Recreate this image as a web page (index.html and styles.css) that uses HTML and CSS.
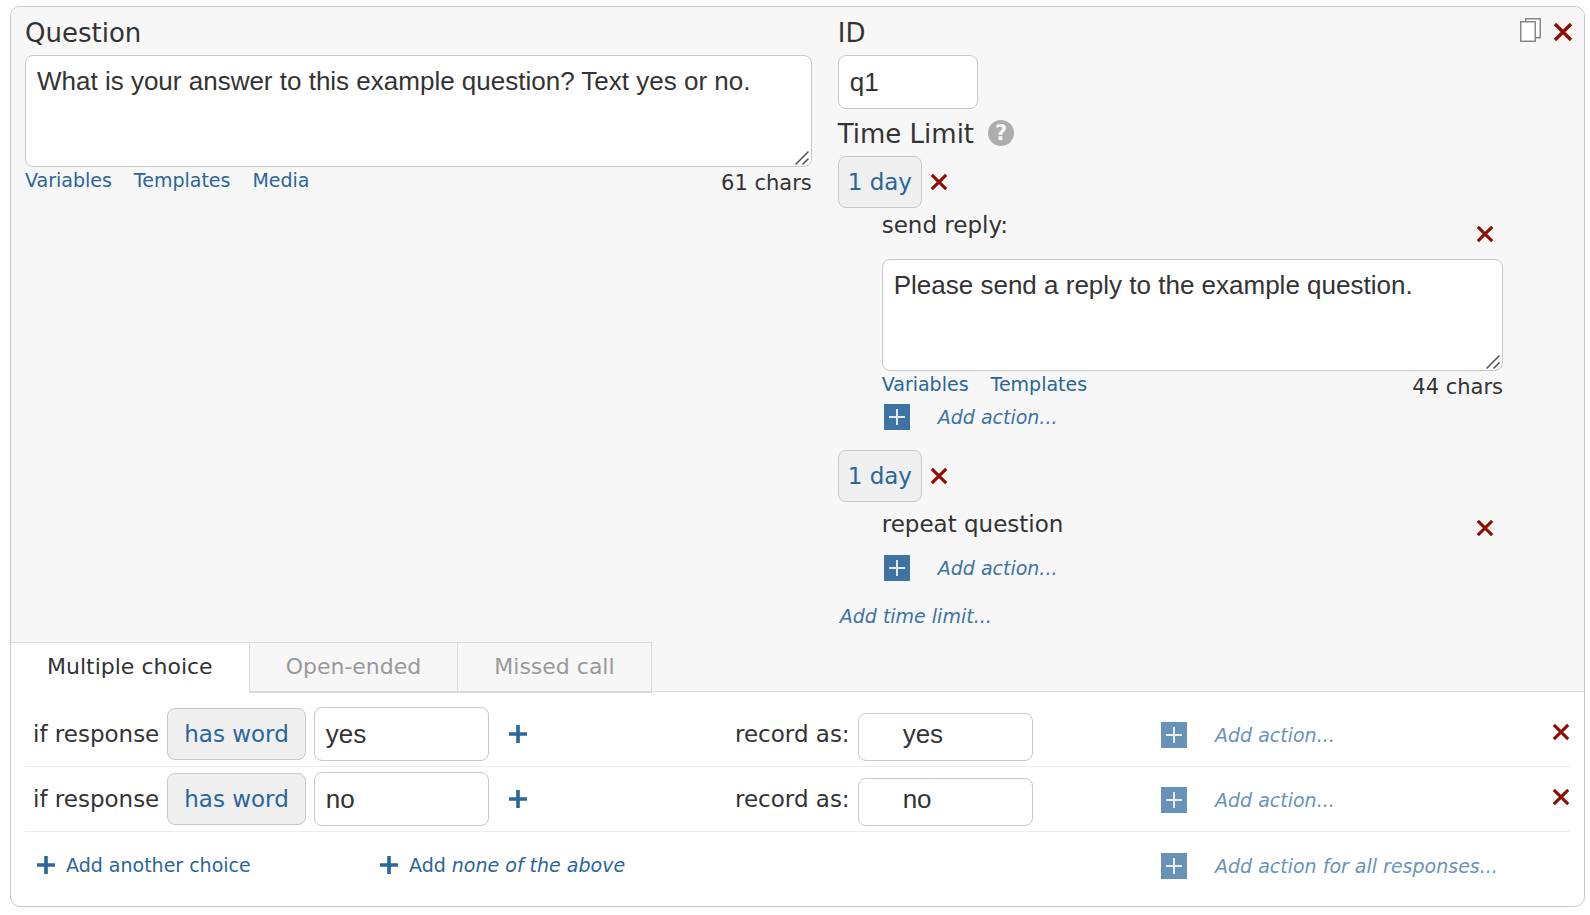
FILE: index.html
```html
<!DOCTYPE html>
<html lang="en">
<head>
    <meta charset="UTF-8">
    <meta name="viewport" content="width=device-width, initial-scale=1.0">
    <title>Edit Question</title>
    <link rel="stylesheet" href="styles.css">
</head>
<body>
    <!-- Shared icons -->
    <svg class="icon-defs" aria-hidden="true">
        <symbol id="icon-x" viewBox="0 0 20 20">
            <path d="M2 2L18 18M18 2L2 18" stroke="#910c00" stroke-width="3.4" fill="none"/>
        </symbol>
        <symbol id="icon-plus" viewBox="0 0 18 18">
            <path d="M9 0V18M0 9H18" stroke="#2a659b" stroke-width="3.6" fill="none"/>
        </symbol>
        <symbol id="icon-box-plus" viewBox="0 0 26 26">
            <rect width="26" height="26" fill="#2a659b"/>
            <path d="M13 5V21M5 13H21" stroke="#fff" stroke-opacity="0.85" stroke-width="2" fill="none"/>
        </symbol>
        <symbol id="icon-copy" viewBox="0 0 21 24">
            <rect x="5.75" y="0.75" width="14.5" height="19" fill="#fff" stroke="#888" stroke-width="1.5"/>
            <rect x="0.75" y="3.75" width="14.5" height="19.5" fill="#fff" stroke="#888" stroke-width="1.5"/>
        </symbol>
        <symbol id="icon-grip" viewBox="0 0 14 14">
            <path d="M0.5 13.5L13.5 0.5M7.5 13.5L13.5 7.5" stroke="#505050" stroke-width="1.5" fill="none"/>
        </symbol>
    </svg>

    <div class="card">
        <!-- Question and time limits -->
        <div class="top">
            <div class="question">
                <label class="heading" for="question">Question</label>
                <div class="text-box">
                    <textarea id="question">What is your answer to this example question? Text yes or no.</textarea>
                    <svg class="grip"><use href="#icon-grip"/></svg>
                </div>
                <div class="meta">
                    <div class="links">
                        <a href="#">Variables</a>
                        <a href="#">Templates</a>
                        <a href="#">Media</a>
                    </div>
                    <span class="chars">61 chars</span>
                </div>
            </div>

            <div class="settings">
                <div class="settings-top">
                    <label class="heading" for="qid">ID</label>
                    <div class="tools">
                        <button type="button" aria-label="Copy question"><svg class="copy"><use href="#icon-copy"/></svg></button>
                        <button type="button" aria-label="Delete question"><svg class="x-large"><use href="#icon-x"/></svg></button>
                    </div>
                </div>
                <input type="text" class="qid" id="qid" value="q1">
                <div class="heading time-heading">Time Limit <button type="button" class="help" aria-label="Help">?</button></div>

                <div class="limit">
                    <div class="limit-time">
                        <button type="button" class="pill">1 day</button>
                        <button type="button" aria-label="Delete time limit"><svg class="x"><use href="#icon-x"/></svg></button>
                    </div>
                    <div class="actions">
                        <div class="action-head">
                            <label for="reply">send reply:</label>
                            <button type="button" aria-label="Delete action"><svg class="x"><use href="#icon-x"/></svg></button>
                        </div>
                        <div class="text-box">
                            <textarea id="reply">Please send a reply to the example question.</textarea>
                            <svg class="grip"><use href="#icon-grip"/></svg>
                        </div>
                        <div class="meta">
                            <div class="links">
                                <a href="#">Variables</a>
                                <a href="#">Templates</a>
                            </div>
                            <span class="chars">44 chars</span>
                        </div>
                        <a href="#" class="add-action"><svg class="box-plus"><use href="#icon-box-plus"/></svg>Add action...</a>
                    </div>
                </div>

                <div class="limit">
                    <div class="limit-time">
                        <button type="button" class="pill">1 day</button>
                        <button type="button" aria-label="Delete time limit"><svg class="x"><use href="#icon-x"/></svg></button>
                    </div>
                    <div class="actions">
                        <div class="action-head no-input">
                            <span>repeat question</span>
                            <button type="button" aria-label="Delete action"><svg class="x"><use href="#icon-x"/></svg></button>
                        </div>
                        <a href="#" class="add-action"><svg class="box-plus"><use href="#icon-box-plus"/></svg>Add action...</a>
                    </div>
                </div>

                <a href="#" class="add-limit">Add time limit...</a>
            </div>
        </div>

        <!-- Question type -->
        <div class="tabs">
            <button type="button" class="tab active">Multiple choice</button>
            <button type="button" class="tab">Open-ended</button>
            <button type="button" class="tab">Missed call</button>
        </div>

        <!-- Responses -->
        <div class="responses">
            <div class="row">
                <div class="match">
                    <label for="word1">if response</label>
                    <button type="button" class="pill word">has word</button>
                    <input type="text" id="word1" value="yes">
                    <button type="button" class="add-word" aria-label="Add word"><svg class="plus"><use href="#icon-plus"/></svg></button>
                </div>
                <div class="record">
                    <label for="record1">record as:</label>
                    <input type="text" id="record1" value="yes">
                </div>
                <div class="row-actions">
                    <a href="#" class="add-action"><svg class="box-plus"><use href="#icon-box-plus"/></svg>Add action...</a>
                    <button type="button" aria-label="Delete choice"><svg class="x"><use href="#icon-x"/></svg></button>
                </div>
            </div>
            <div class="row">
                <div class="match">
                    <label for="word2">if response</label>
                    <button type="button" class="pill word">has word</button>
                    <input type="text" id="word2" value="no">
                    <button type="button" class="add-word" aria-label="Add word"><svg class="plus"><use href="#icon-plus"/></svg></button>
                </div>
                <div class="record">
                    <label for="record2">record as:</label>
                    <input type="text" id="record2" value="no">
                </div>
                <div class="row-actions">
                    <a href="#" class="add-action"><svg class="box-plus"><use href="#icon-box-plus"/></svg>Add action...</a>
                    <button type="button" aria-label="Delete choice"><svg class="x"><use href="#icon-x"/></svg></button>
                </div>
            </div>
            <div class="row">
                <div class="add-choices">
                    <a href="#"><svg class="plus"><use href="#icon-plus"/></svg>Add another choice</a>
                    <a href="#"><svg class="plus"><use href="#icon-plus"/></svg><span>Add <i>none of the above</i></span></a>
                </div>
                <div></div>
                <div class="row-actions">
                    <a href="#" class="add-action"><svg class="box-plus"><use href="#icon-box-plus"/></svg>Add action for all responses...</a>
                </div>
            </div>
        </div>
    </div>
</body>
</html>
```
FILE: styles.css
```css
* {
    box-sizing: border-box;
}
body {
    margin: 6px 5px 8px 10px;
    background-color: white;
    color: #333;
    font-family: Verdana, "DejaVu Sans", sans-serif;
    font-size: 23px;
    line-height: 28px;
}
a {
    color: #2a659b;
    font-size: 19px;
    text-decoration: none;
}
button {
    padding: 0;
    border: none;
    background: none;
    color: inherit;
    font: inherit;
    cursor: pointer;
}
svg {
    display: block;
    flex: none;
}
input[type="text"], textarea {
    border: 1px solid #c8c8c8;
    border-radius: 8px;
    background-color: white;
    color: #333;
    font-family: Arial, "Liberation Sans", sans-serif;
    font-size: 26px;
}
input[type="text"] {
    width: 175px;
    height: 54px;
    padding: 0 11px;
}
textarea {
    display: block;
    width: 100%;
    height: 112px;
    padding: 10px 11px;
    line-height: 31px;
    resize: none;
}

/* Icons */
.icon-defs {
    display: none;
}
.x {
    width: 18px;
    height: 18px;
}
.x-large {
    width: 20px;
    height: 20px;
}
.copy {
    width: 21px;
    height: 24px;
}
.plus {
    width: 18px;
    height: 18px;
}
.box-plus {
    width: 26px;
    height: 26px;
}

.card {
    border: 1px solid #c8c8c8;
    border-radius: 10px;
    overflow: hidden;
}

/* Question and time limits */
.top {
    display: grid;
    grid-template-columns: 1.07fr 1fr;
    gap: 26px;
    padding: 10px 11px 13px 14px;
    background-color: #f7f7f7;
}
.heading {
    display: block;
    margin-bottom: 6px;
    font-size: 26px;
    line-height: 32px;
}
.text-box {
    position: relative;
}
.grip {
    position: absolute;
    right: 3px;
    bottom: 2px;
    width: 14px;
    height: 14px;
    pointer-events: none;
}
.meta {
    display: flex;
    justify-content: space-between;
    align-items: flex-start;
    margin-top: 1px;
}
.links {
    display: flex;
    gap: 22px;
    line-height: 24px;
}
.chars {
    margin-top: 1px;
    font-size: 21px;
}
.settings-top {
    display: flex;
    justify-content: space-between;
    align-items: flex-start;
}
.tools {
    display: flex;
    align-items: flex-end;
    gap: 12px;
    padding-top: 1px;
}
.settings .qid {
    display: block;
    width: 140px;
}
.time-heading {
    display: flex;
    align-items: center;
    gap: 14px;
    margin-top: 9px;
}
.help {
    width: 26px;
    height: 26px;
    margin-bottom: 3px;
    border-radius: 50%;
    background-color: #adadad;
    color: #f7f7f7;
    font-size: 21px;
    font-weight: bold;
    line-height: 26px;
}
.limit {
    margin-bottom: 19px;
}
.limit-time {
    display: flex;
    align-items: center;
    gap: 8px;
}
.pill {
    height: 52px;
    padding: 0 9px;
    border: 1px solid #c8c8c8;
    border-radius: 8px;
    background-color: #efefef;
    color: #2a659b;
}
.actions {
    margin: 0 70px 0 44px;
}
.action-head {
    display: flex;
    justify-content: space-between;
    height: 51px;
    padding: 3px 9px 0 0;
}
.action-head button {
    height: 45px;
}
.no-input {
    height: 50px;
    padding-top: 8px;
}
.no-input button {
    height: 36px;
}
.add-action {
    display: flex;
    align-items: center;
    gap: 28px;
    margin: 2px 0 0 2px;
    font-style: italic;
    opacity: 0.9;
}
.add-limit {
    display: block;
    padding: 2px 0 0 2px;
    font-style: italic;
    line-height: 26px;
    opacity: 0.9;
}

/* Tabs */
.tabs {
    display: flex;
    height: 50px;
    background-color: #f7f7f7;
    border-bottom: 1px solid #dadada;
}
.tab {
    height: 51px;
    padding: 0 36px;
    border: solid #dadada;
    border-width: 1px 1px 2px 0;
    background-color: #f7f7f7;
    color: #999;
    font-size: 22px;
}
.tab.active {
    border-bottom-color: white;
    background-color: white;
    color: #333;
}

/* Responses */
.responses {
    padding: 10px 14px 9px;
}
.row {
    display: grid;
    grid-template-columns: 5fr 3fr 2.88fr;
    align-items: center;
    height: 65px;
    border-bottom: 1px solid #ededed;
}
.row:last-child {
    border-bottom: none;
}
.match, .record {
    display: flex;
    align-items: center;
    gap: 8px;
}
.match {
    padding-left: 8px;
}
.word {
    padding: 0 16px;
}
.add-word {
    margin-left: 12px;
}
.record input[type="text"] {
    height: 48px;
    margin-top: 6px;
    padding: 0 44px 6px;
}
.row-actions {
    display: flex;
    justify-content: space-between;
    align-items: center;
}
.row-actions .add-action {
    margin-left: 0;
    opacity: 0.7;
}
.row-actions button {
    margin-bottom: 5px;
}
.add-choices {
    display: grid;
    grid-template-columns: 1fr 1fr;
}
.add-choices a {
    display: flex;
    align-items: center;
    gap: 11px;
}
.add-choices a:first-child {
    padding-left: 12px;
}
```
